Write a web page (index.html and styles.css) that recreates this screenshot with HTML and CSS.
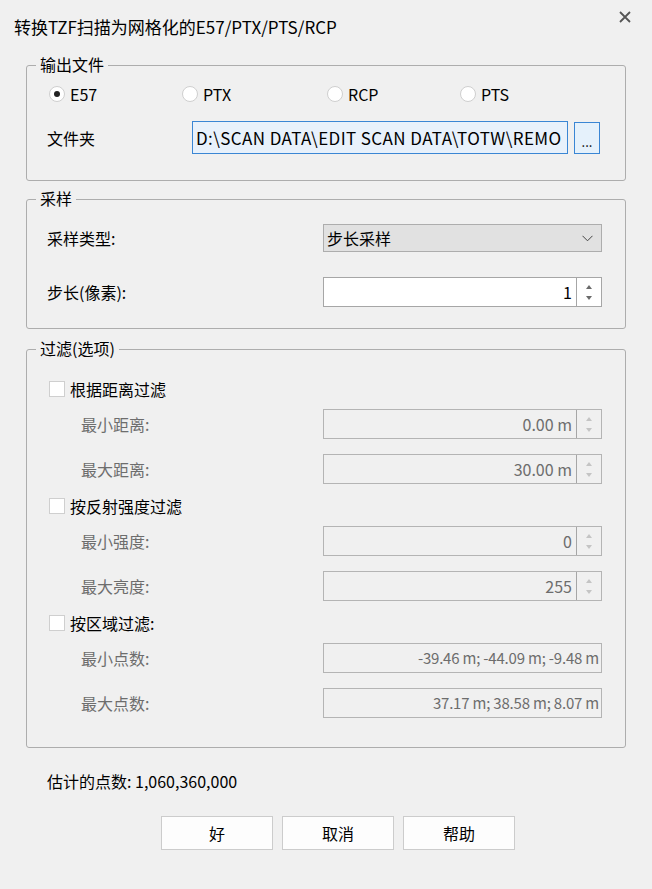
FILE: index.html
```html
<!DOCTYPE html>
<html lang="zh-CN">
<head>
  <meta charset="UTF-8">
  <title>转换TZF扫描</title>
  <link rel="stylesheet" href="styles.css">
</head>
<body>
  <div class="dialog">
    <div class="titlebar">
      <h1 class="title">转换TZF扫描为网格化的E57/PTX/PTS/RCP</h1>
      <button class="close" aria-label="关闭">
        <svg width="12" height="12" viewBox="0 0 12 12"><path d="M1 1 L11 11 M11 1 L1 11" stroke="#555" stroke-width="1.8" fill="none"/></svg>
      </button>
    </div>

    <!-- Output file -->
    <fieldset class="group group-output">
      <legend>输出文件</legend>
      <div class="group-body">
        <div class="radio-row">
          <label class="radio checked"><span class="radio-mark"></span>E57</label>
          <label class="radio"><span class="radio-mark"></span>PTX</label>
          <label class="radio"><span class="radio-mark"></span>RCP</label>
          <label class="radio"><span class="radio-mark"></span>PTS</label>
        </div>
        <div class="folder-row">
          <span class="folder-label">文件夹</span>
          <div class="path-box">D:\SCAN DATA\EDIT SCAN DATA\TOTW\REMO</div>
          <button class="browse">...</button>
        </div>
      </div>
    </fieldset>

    <!-- Sampling -->
    <fieldset class="group group-sample">
      <legend>采样</legend>
      <div class="group-body">
        <div class="field-row">
          <span class="field-label">采样类型:</span>
          <div class="combo">
            <span class="combo-value">步长采样</span>
            <svg class="chevron" width="11" height="7" viewBox="0 0 11 7"><path d="M0.5 0.8 L5.5 5.8 L10.5 0.8" stroke="#444" stroke-width="1" fill="none"/></svg>
          </div>
        </div>
        <div class="field-row step-row">
          <span class="field-label">步长(像素):</span>
          <div class="spin">
            <span class="spin-value">1</span>
            <span class="spin-btns"><span class="arrow-up"></span><span class="arrow-down"></span></span>
          </div>
        </div>
      </div>
    </fieldset>

    <!-- Filters -->
    <fieldset class="group group-filter">
      <legend>过滤(选项)</legend>
      <div class="group-body">
        <label class="check-row"><span class="check-box"></span>根据距离过滤</label>
        <div class="field-row sub-row">
          <span class="field-label">最小距离:</span>
          <div class="spin disabled"><span class="spin-value">0.00 m</span><span class="spin-btns"><span class="arrow-up"></span><span class="arrow-down"></span></span></div>
        </div>
        <div class="field-row sub-row">
          <span class="field-label">最大距离:</span>
          <div class="spin disabled"><span class="spin-value">30.00 m</span><span class="spin-btns"><span class="arrow-up"></span><span class="arrow-down"></span></span></div>
        </div>

        <label class="check-row"><span class="check-box"></span>按反射强度过滤</label>
        <div class="field-row sub-row">
          <span class="field-label">最小强度:</span>
          <div class="spin disabled"><span class="spin-value">0</span><span class="spin-btns"><span class="arrow-up"></span><span class="arrow-down"></span></span></div>
        </div>
        <div class="field-row sub-row">
          <span class="field-label">最大亮度:</span>
          <div class="spin disabled"><span class="spin-value">255</span><span class="spin-btns"><span class="arrow-up"></span><span class="arrow-down"></span></span></div>
        </div>

        <label class="check-row"><span class="check-box"></span>按区域过滤:</label>
        <div class="field-row sub-row">
          <span class="field-label">最小点数:</span>
          <div class="textbox disabled">-39.46 m; -44.09 m; -9.48 m</div>
        </div>
        <div class="field-row sub-row">
          <span class="field-label">最大点数:</span>
          <div class="textbox disabled">37.17 m; 38.58 m; 8.07 m</div>
        </div>
      </div>
    </fieldset>

    <p class="estimate">估计的点数: 1,060,360,000</p>

    <div class="buttons">
      <button class="btn">好</button>
      <button class="btn">取消</button>
      <button class="btn">帮助</button>
    </div>
  </div>
</body>
</html>
```

FILE: styles.css
```css
/* Windows-style dialog */
body {
  margin: 0;
  background-color: #f0f0f0;
  font-family: "Noto Sans CJK SC", "Noto Sans", sans-serif;
  font-size: 16px;
  line-height: 20px;
  color: #000;
}

.dialog {
  width: 652px;
  height: 889px;
  background-color: #f0f0f0;
}

.titlebar {
  display: flex;
  justify-content: space-between;
  align-items: flex-start;
  height: 55px;
}

.title {
  margin: 17px 0 0 14px;
  font-size: 17px;
  font-weight: normal;
  line-height: 20px;
}

.close {
  width: 24px;
  height: 24px;
  margin: 5px 15px 0 0;
  padding: 0;
  border: none;
  background: none;
  display: flex;
  align-items: center;
  justify-content: center;
}

/* Group boxes */
.group {
  margin: 0 26px;
  padding: 0;
  border: 1px solid #adadad;
  border-radius: 3px;
}

.group legend {
  margin-left: 9px;
  padding: 0 4px 2px;
  font-size: 16px;
  line-height: 18px;
}

.group-output .group-body {
  padding: 7px 23px 26px 20px;
}

.group-sample {
  margin-top: 8px;
}

.group-sample .group-body {
  padding: 15px 23px 21px 20px;
}

.group-filter {
  margin-top: 10px;
}

.group-filter .group-body {
  padding: 20px 23px 29px 20px;
}

/* Radios */
.radio-row {
  display: grid;
  grid-template-columns: 133px 145px 133px 1fr;
  height: 24px;
  align-items: center;
}

.radio {
  display: flex;
  align-items: center;
  gap: 5px;
  margin-left: 2px;
}

.radio-mark {
  width: 16px;
  height: 16px;
  box-sizing: border-box;
  border: 1px solid #cfcfcf;
  border-radius: 50%;
  background-color: #fff;
  display: flex;
  align-items: center;
  justify-content: center;
}

.radio.checked .radio-mark::after {
  content: "";
  width: 6px;
  height: 6px;
  border-radius: 50%;
  background-color: #222;
}

/* Folder */
.folder-row {
  display: flex;
  align-items: center;
  height: 33px;
  margin-top: 15px;
}

.folder-label {
  width: 145px;
}

.path-box {
  width: 376px;
  height: 33px;
  box-sizing: border-box;
  border: 1px solid #3a86d4;
  background-color: #e8f1fb;
  padding: 0 3px;
  overflow: hidden;
  white-space: nowrap;
  line-height: 31px;
  font-size: 17px;
  letter-spacing: 0.4px;
}

.browse {
  width: 26px;
  height: 32px;
  margin-left: 6px;
  padding: 0;
  border: 1px solid #3a86d4;
  background-color: #e5f1fb;
  font-family: inherit;
  font-size: 13px;
  line-height: 20px;
  padding-top: 8px;
}

/* Label + control rows */
.field-row {
  display: flex;
  align-items: center;
}

.field-label {
  width: 276px;
}

.step-row {
  margin-top: 25px;
}

.combo {
  width: 279px;
  height: 28px;
  box-sizing: border-box;
  border: 1px solid #adadad;
  background-color: #e1e1e1;
  display: flex;
  align-items: center;
  justify-content: space-between;
  padding: 0 8px 0 3px;
}

.spin,
.textbox {
  width: 279px;
  height: 30px;
  box-sizing: border-box;
  border: 1px solid #a6a6a6;
  background-color: #fff;
  display: flex;
}

.spin-value {
  flex: 1;
  text-align: right;
  padding-right: 4px;
  line-height: 28px;
}

.spin-btns {
  width: 24px;
  border-left: 1px solid #a6a6a6;
  display: flex;
  flex-direction: column;
  align-items: center;
  justify-content: center;
  gap: 7px;
}

.arrow-up {
  border-left: 3px solid transparent;
  border-right: 3px solid transparent;
  border-bottom: 4px solid #6a6a6a;
}

.arrow-down {
  border-left: 3px solid transparent;
  border-right: 3px solid transparent;
  border-top: 4px solid #6a6a6a;
}

.textbox {
  justify-content: flex-end;
  padding-right: 2px;
  line-height: 28px;
  font-size: 15px;
  letter-spacing: -0.2px;
}

.disabled {
  background-color: #f0f0f0;
  border-color: #b4b4b4;
  color: #6d6d6d;
}

.spin.disabled .spin-btns {
  border-left-color: #a6a6a6;
}

.disabled .arrow-up {
  border-bottom-color: #c4c4c4;
}

.disabled .arrow-down {
  border-top-color: #c4c4c4;
}

/* Filter checkboxes */
.check-row {
  display: flex;
  align-items: center;
  gap: 5px;
  height: 20px;
  margin-top: 12px;
  margin-left: 2px;
}

.group-body .check-row:first-child {
  margin-top: 0;
}

.check-box {
  width: 16px;
  height: 16px;
  box-sizing: border-box;
  border: 1px solid #cfcfcf;
  background-color: #fff;
}

.sub-row {
  margin-top: 15px;
}

.check-row + .sub-row {
  margin-top: 10px;
}

.sub-row .field-label {
  padding-left: 34px;
  box-sizing: border-box;
  color: #6d6d6d;
}

.estimate {
  margin: 23px 0 0 47px;
}

.buttons {
  display: flex;
  gap: 9px;
  margin-top: 25px;
  padding-left: 161px;
}

.btn {
  width: 112px;
  height: 34px;
  border: 1px solid #cccccc;
  background-color: #fdfdfd;
  font-family: inherit;
  font-size: 16px;
  color: #000;
}
```
